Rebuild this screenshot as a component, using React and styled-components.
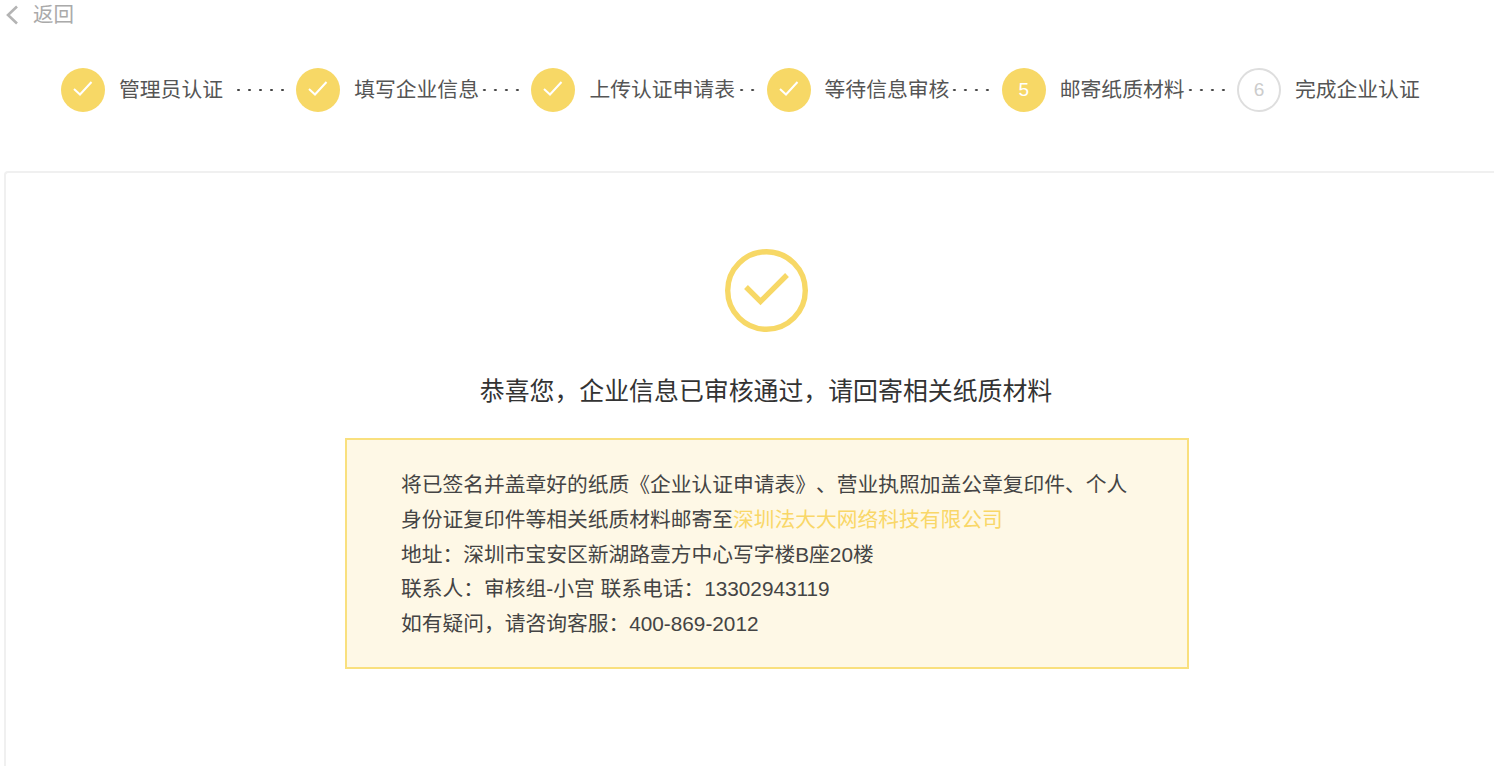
import styled, { createGlobalStyle } from "styled-components";

const GlobalStyle = createGlobalStyle`
  html, body {
    margin: 0;
    padding: 0;
    background: #fff;
    overflow: hidden;
  }
  body {
    font-family: "Liberation Sans", "Noto Sans CJK SC", sans-serif;
    text-spacing-trim: space-all;
  }
`;

const Page = styled.div`
  display: flex;
  flex-direction: column;
  height: 766px;
  overflow: hidden;
`;

const BackBar = styled.div`
  display: flex;
  align-items: center;
  gap: 14px;
  height: 29px;
  padding-left: 5px;
  color: #aaa;
  font-size: 20.5px;
`;

const BackText = styled.span`
  padding-bottom: 3px;
`;

const Steps = styled.div`
  display: flex;
  align-items: center;
  height: 44px;
  margin-top: 39px;
  padding-left: 61px;
`;

const Step = styled.div`
  display: flex;
  align-items: center;
  flex: 0 0 235.2px;
`;

const Circle = styled.div`
  flex: 0 0 44px;
  display: flex;
  align-items: center;
  justify-content: center;
  box-sizing: border-box;
  height: 44px;
  border-radius: 50%;
  font-size: 19px;
  background: ${(p) => (p.$todo ? "#fff" : "#f7d866")};
  border: ${(p) => (p.$todo ? "2px solid #dedede" : "none")};
  color: ${(p) => (p.$todo ? "#ccc" : "#fff")};
`;

const Label = styled.span`
  margin-left: 14px;
  padding-bottom: 4px;
  color: #555;
  font-size: 20.8px;
  white-space: nowrap;
`;

const Dots = styled.span`
  flex: 1;
  max-width: 55px;
  height: 4px;
  margin-left: auto;
  margin-right: 8.5px;
  background: radial-gradient(circle, #444 1px, transparent 1.5px) right center / 11px 4px repeat-x;
`;

const Card = styled.div`
  flex: 1;
  display: flex;
  flex-direction: column;
  align-items: center;
  margin: 59px 0 0 4px;
  padding: 76px 0 0 34px;
  border: 2px solid #f0f0f0;
  border-width: 2px 0 0 2px;
  border-radius: 4px 0 0 0;
`;

const BigIcon = styled.svg`
  flex: none;
  margin-left: -2px;
`;

const Title = styled.h1`
  margin: 41px 2px 0 0;
  color: #333;
  font-size: 24.9px;
  font-weight: 400;
  line-height: 36px;
  white-space: nowrap;
`;

const Notice = styled.div`
  box-sizing: border-box;
  width: 844px;
  height: 231px;
  margin-top: 29px;
  padding: 28px 58px 0 54px;
  background: #fef8e6;
  border: 2px solid #f9e07e;
  color: #444;
  font-size: 20.75px;
  line-height: 34.8px;
`;

const Line = styled.div`
  white-space: nowrap;
`;

const Company = styled.span`
  color: #f9d768;
`;

const steps = [
  { text: "管理员认证", done: true },
  { text: "填写企业信息", done: true },
  { text: "上传认证申请表", done: true },
  { text: "等待信息审核", done: true },
  { text: "邮寄纸质材料", no: 5 },
  { text: "完成企业认证", no: 6, todo: true },
];

function SmallCheck() {
  return (
    <svg width="44" height="44" viewBox="0 0 44 44" fill="none">
      <path d="M13 21l6 5.5L30.5 14" stroke="#fff" strokeWidth="2" />
    </svg>
  );
}

function BigCheck() {
  return (
    <BigIcon width="83" height="83" viewBox="0 0 83 83" fill="none">
      <circle cx="41.5" cy="41.5" r="38.8" stroke="#f7d866" strokeWidth="5.4" />
      <path d="M21 38l14.5 14.5L62 26" stroke="#f7d866" strokeWidth="5.4" />
    </BigIcon>
  );
}

export default function App() {
  return (
    <Page>
      <GlobalStyle />
      <BackBar>
        <svg width="14" height="20" viewBox="0 0 14 20" fill="none">
          <path d="M12 1.5L3 10l9 8.5" stroke="#b4b4b4" strokeWidth="2.6" />
        </svg>
        <BackText>返回</BackText>
      </BackBar>

      <Steps>
        {steps.map((s, i) => (
          <Step key={s.text}>
            <Circle $todo={s.todo}>{s.done ? <SmallCheck /> : s.no}</Circle>
            <Label>{s.text}</Label>
            {i < steps.length - 1 && <Dots />}
          </Step>
        ))}
      </Steps>

      <Card>
        <BigCheck />
        <Title>恭喜您&#xFF0C;企业信息已审核通过&#xFF0C;请回寄相关纸质材料</Title>
        <Notice>
          <Line>将已签名并盖章好的纸质《企业认证申请表》、营业执照加盖公章复印件、个人</Line>
          <Line>
            身份证复印件等相关纸质材料邮寄至<Company>深圳法大大网络科技有限公司</Company>
          </Line>
          <Line>地址&#xFF1A;深圳市宝安区新湖路壹方中心写字楼B座20楼</Line>
          <Line>联系人&#xFF1A;审核组-小宫 联系电话&#xFF1A;13302943119</Line>
          <Line>如有疑问&#xFF0C;请咨询客服&#xFF1A;400-869-2012</Line>
        </Notice>
      </Card>
    </Page>
  );
}
